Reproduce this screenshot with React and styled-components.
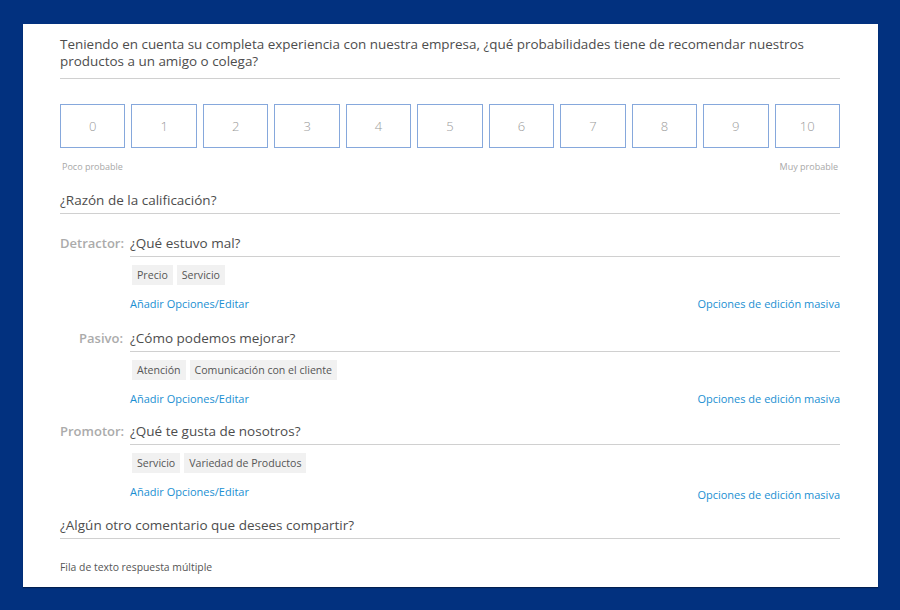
import React from "react";
import styled, { createGlobalStyle } from "styled-components";

const Global = createGlobalStyle`
  html, body { margin: 0; padding: 0; background: #02317f; }
  body { font-family: "Open Sans", "Noto Sans", Arial, sans-serif; }
  * { box-sizing: border-box; }
`;

const Page = styled.div`
  width: 900px;
  height: 610px;
  padding: 24px 22px 23px 23px;
  background: #02317f;
`;

const Card = styled.div`
  width: 855px;
  height: 563px;
  background: #ffffff;
  box-shadow: 0 1px 1px rgba(0, 0, 0, 0.35);
  padding: 12px 38px 0 37px;
  display: flex;
  flex-direction: column;
`;

const MainQuestion = styled.div`
  font-size: 13.45px;
  line-height: 17px;
  color: #4d4d4d;
  padding-bottom: 8px;
  border-bottom: 1px solid #d0d0d0;
`;

const Scale = styled.div`
  margin-top: 25px;
  display: grid;
  grid-template-columns: repeat(11, 1fr);
  gap: 6px;
`;

const ScaleBox = styled.div`
  height: 44px;
  border: 1px solid #86a8dc;
  display: flex;
  align-items: center;
  justify-content: center;
  font-size: 13px;
  font-weight: 300;
  color: #9a9a9a;
`;

const ScaleLegend = styled.div`
  margin-top: 13px;
  display: flex;
  justify-content: space-between;
  font-size: 9px;
  line-height: 12px;
  color: #a8a8a8;
  padding: 0 2px;
`;

const Heading = styled.div`
  margin-top: ${(p) => p.$mt || 0}px;
  font-size: 13.5px;
  line-height: 18px;
  color: #4d4d4d;
  padding-bottom: 4px;
  border-bottom: 1px solid #d0d0d0;
`;

const Group = styled.div`
  margin-top: ${(p) => p.$mt}px;
  display: grid;
  grid-template-columns: 63px 1fr;
  column-gap: 7px;
`;

const Label = styled.div`
  text-align: right;
  font-size: 13px;
  line-height: 18px;
  font-weight: 600;
  color: #ababab;
  white-space: nowrap;
`;

const Body = styled.div`
  display: flex;
  flex-direction: column;
`;

const SubQuestion = styled.div`
  font-size: 13.5px;
  line-height: 18px;
  color: #4d4d4d;
  padding-bottom: 4px;
  border-bottom: 1px solid #d0d0d0;
`;

const Chips = styled.div`
  margin-top: 8px;
  display: flex;
  gap: 4px;
  padding-left: 2px;
`;

const Chip = styled.span`
  height: 20px;
  padding: 0 5px;
  display: inline-flex;
  align-items: center;
  background: #f1f1f1;
  font-size: 10.6px;
  color: #555;
`;

const Links = styled.div`
  margin-top: 12px;
  display: flex;
  justify-content: space-between;
  align-items: flex-start;
`;

const LinkText = styled.a`
  font-size: 11px;
  line-height: 14px;
  font-weight: 500;
  color: #1a8fd2;
  text-decoration: none;
  cursor: pointer;
  margin-top: ${(p) => p.$mt || 0}px;
`;

const Footnote = styled.div`
  margin-top: 22px;
  font-size: 10.4px;
  line-height: 13px;
  color: #555;
`;

const groups = [
  { label: "Detractor:", q: "¿Qué estuvo mal?", chips: ["Precio", "Servicio"], mt: 20, off: 0 },
  { label: "Pasivo:", q: "¿Cómo podemos mejorar?", chips: ["Atención", "Comunicación con el cliente"], mt: 18, off: 0 },
  { label: "Promotor:", q: "¿Qué te gusta de nosotros?", chips: ["Servicio", "Variedad de Productos"], mt: 16, off: 3 },
];

export default function App() {
  return (
    <>
      <Global />
      <Page>
        <Card>
          <MainQuestion>
            Teniendo en cuenta su completa experiencia con nuestra empresa, ¿qué probabilidades tiene de recomendar nuestros productos a un amigo o colega?
          </MainQuestion>
          <Scale>
            {Array.from({ length: 11 }, (_, i) => (
              <ScaleBox key={i}>{i}</ScaleBox>
            ))}
          </Scale>
          <ScaleLegend>
            <span>Poco probable</span>
            <span>Muy probable</span>
          </ScaleLegend>
          <Heading $mt={18}>¿Razón de la calificación?</Heading>
          {groups.map((g) => (
            <Group key={g.label} $mt={g.mt}>
              <Label>{g.label}</Label>
              <Body>
                <SubQuestion>{g.q}</SubQuestion>
                <Chips>
                  {g.chips.map((c) => (
                    <Chip key={c}>{c}</Chip>
                  ))}
                </Chips>
                <Links>
                  <LinkText>Añadir Opciones/Editar</LinkText>
                  <LinkText $mt={g.off}>Opciones de edición masiva</LinkText>
                </Links>
              </Body>
            </Group>
          ))}
          <Heading $mt={14}>¿Algún otro comentario que desees compartir?</Heading>
          <Footnote>Fila de texto respuesta múltiple</Footnote>
        </Card>
      </Page>
    </>
  );
}
